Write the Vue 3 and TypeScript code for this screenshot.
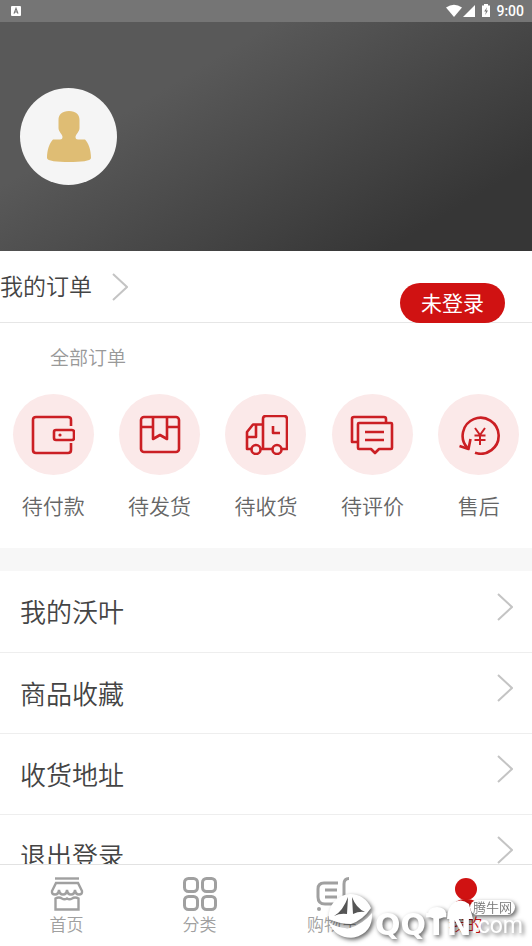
<script setup lang="ts">
interface OrderEntry {
  label: string
  icon: 'wallet' | 'box' | 'truck' | 'comment' | 'refund'
}

interface Tab {
  label: string
  icon: 'shop' | 'grid' | 'cart' | 'user'
  active?: boolean
}

const orders: OrderEntry[] = [
  { label: '待付款', icon: 'wallet' },
  { label: '待发货', icon: 'box' },
  { label: '待收货', icon: 'truck' },
  { label: '待评价', icon: 'comment' },
  { label: '售后', icon: 'refund' },
]

const menu: string[] = ['我的沃叶', '商品收藏', '收货地址', '退出登录']

const tabs: Tab[] = [
  { label: '首页', icon: 'shop' },
  { label: '分类', icon: 'grid' },
  { label: '购物车', icon: 'cart' },
  { label: '我的', icon: 'user', active: true },
]
</script>

<template>
  <div class="app">
    <div class="status">
      <svg class="status-app" viewBox="0 0 10 10" aria-hidden="true">
        <rect width="10" height="10" rx="1" fill="#fff" />
        <path d="M3 7.6 5 2.4 7 7.6M3.7 6h2.6" fill="none" stroke="#777" stroke-width="1.2" />
      </svg>
      <div class="status-right">
        <svg class="status-signal" viewBox="0 0 46 14" aria-hidden="true">
          <path d="M0 3.5Q8 -2 16 3.5L8 13Z" fill="#fff" />
          <path d="M29 1V13H17Z" fill="#fff" />
          <path d="M36 1.4H38V0H42V1.4H44V13H36Z" fill="#fff" />
          <path d="M41 3.2 38.2 7.6H40L39.2 11 42 6.6H40.2Z" fill="#777" />
        </svg>
        <span>9:00</span>
      </div>
    </div>

    <main class="content">
      <header class="profile">
        <div class="avatar">
          <svg viewBox="0 0 44 51" aria-hidden="true">
            <path
              d="M22 0C29 0 32.500 3.500 32.500 9V17C32.500 21 28.500 23 28.500 26Q28.500 28.500 31 28.500H38C41.500 32 44 39 44 47C44 50 34 51 22 51C10 51 0 50 0 47C0 39 2.500 32 6 28.500H13Q15.500 28.500 15.500 26C15.500 23 11.500 21 11.500 17V9C11.500 3.500 15 0 22 0Z"
              fill="#dfbd74"
            />
          </svg>
        </div>
      </header>

      <section class="orders">
        <div class="orders-head">
          <h2>我的订单</h2>
          <svg class="chevron small" viewBox="0 0 16 28" aria-hidden="true"><path d="M1 1 15 14 1 27" /></svg>
          <button type="button" class="login">未登录</button>
        </div>
        <a class="all" href="#">全部订单</a>
        <nav class="order-list">
          <a v-for="o in orders" :key="o.label" class="order" href="#">
            <span class="disc">
              <svg viewBox="0 0 44 40" aria-hidden="true">
                <g v-if="o.icon === 'wallet'">
                  <path d="M40 11V5Q40 2 37 2H5Q2 2 2 5V35Q2 38 5 38H37Q40 38 40 35V28" />
                  <rect x="23" y="15" width="20" height="10" rx="2" />
                  <circle cx="29" cy="20" r="1.600" class="solid" />
                </g>
                <g v-else-if="o.icon === 'box'">
                  <rect x="3" y="2" width="38" height="35" rx="3" />
                  <path d="M3 12H15M29 12H41M15 2V24L22 20 29 24V2" />
                </g>
                <g v-else-if="o.icon === 'truck'">
                  <path d="M7 34H3V17L9 9.500H19M19 34V4Q19 1 22 1H40Q43 1 43 4V34H38M17 34H28M3 22H12V10" />
                  <path d="M29 11V18H36" />
                  <circle cx="12" cy="34.500" r="4.500" />
                  <circle cx="33" cy="34.500" r="4.500" />
                </g>
                <g v-else-if="o.icon === 'comment'">
                  <path d="M7 27H2V4Q2 2 4 2H34Q36 2 36 4V8" />
                  <path d="M9 8H41Q42 8 42 9V33Q42 34 41 34H29L25 38 21 34H9Q8 34 8 33V9Q8 8 9 8Z" />
                  <path d="M15 17H34M15 25H34" />
                </g>
                <g v-else>
                  <path d="M10.500 33A18 18 0 1 1 18 37.800" />
                  <path d="M2.500 31 11.500 34 13.500 24" />
                  <path d="M18 13 23 20 28 13M23 20V30M17.500 20.500H28.500M17.500 25H28.500" class="thin" />
                </g>
              </svg>
            </span>
            <span class="order-label">{{ o.label }}</span>
          </a>
        </nav>
      </section>

      <nav class="menu">
        <a v-for="m in menu" :key="m" class="menu-row" href="#">
          <span>{{ m }}</span>
          <svg class="chevron" viewBox="0 0 16 28" aria-hidden="true"><path d="M1 1 15 14 1 27" /></svg>
        </a>
      </nav>
    </main>

    <nav class="tabbar">
      <a v-for="t in tabs" :key="t.label" class="tab" :class="{ active: t.active }" href="#">
        <svg viewBox="0 0 34 34" aria-hidden="true">
          <g v-if="t.icon === 'shop'" class="fine">
            <path d="M5 1.500H29" />
            <path d="M6 6H28L32 14Q32.500 17.500 29 17.500Q25.500 17.500 25 13Q24.500 17.500 21 17.500Q17.500 17.500 17 13Q16.500 17.500 13 17.500Q9.500 17.500 9 13Q8.500 17.500 5 17.500Q1.500 17.500 2 14Z" />
            <path d="M5.500 21.500Q9 19.500 12 21.500Q14.500 23 17 21.500Q19.500 23 22 21.500Q25 19.500 28.500 21.500V32.500H5.500Z" />
          </g>
          <g v-else-if="t.icon === 'grid'">
            <rect x="1.500" y="1.500" width="13" height="13" rx="4" />
            <rect x="19.500" y="1.500" width="13" height="13" rx="4" />
            <rect x="1.500" y="19.500" width="13" height="13" rx="4" />
            <rect x="19.500" y="19.500" width="13" height="13" rx="4" />
          </g>
          <g v-else-if="t.icon === 'cart'">
            <path d="M33 1.500Q28 1.500 28 7V20Q28 27 22 27H9Q2 27 2 20V12Q2 6 8 6H22M9 13H21M9 20H21" />
            <circle cx="3" cy="32" r="2" class="dot" />
            <circle cx="26" cy="32" r="2" class="dot" />
          </g>
          <g v-else class="figure">
            <circle cx="17" cy="12" r="11" />
            <path d="M2 34Q4 22 17 22Q30 22 32 34Z" />
          </g>
        </svg>
        <span>{{ t.label }}</span>
      </a>

      <div class="mark">
        <svg class="mark-figure" viewBox="0 0 48 26" aria-hidden="true">
          <ellipse cx="10" cy="14" rx="9" ry="6" fill="#fff" />
          <path d="M20 20Q20 8 28 3Q35 -1 42 5L46 20Z" fill="#fff" />
        </svg>
        <svg class="mark-ball" viewBox="0 0 50 46" aria-hidden="true">
          <path
            d="M25 1A22 22 0 0 1 46 15Q38 27 26 31Q14 31 4 26A22 22 0 0 1 25 1Z"
            fill="#fff"
          />
          <path d="M4 30Q15 36 25 35Q38 31 47 20Q48 40 29 44.500Q11 46 4 30Z" fill="#fff" />
          <path d="M9 23Q18 18 23 4L22 21Q15 20 9 23Z" fill="#555" />
          <path d="M27 4Q31 15 40 19Q34 18 28 21Z" fill="#555" />
        </svg>
        <span class="mark-name">QQTN</span>
        <span class="mark-com">.com</span>
        <span class="mark-pill">腾牛网</span>
      </div>
    </nav>
  </div>
</template>

<style>
body {
  margin: 0;
  background: #fff;
}
</style>

<style scoped>
.app {
  display: flex;
  flex-direction: column;
  height: 100vh;
  overflow: hidden;
  background: #fff;
  color: #444;
  font-family: Roboto, "Noto Sans CJK SC", sans-serif;
  font-weight: 350;
}
a {
  color: inherit;
  text-decoration: none;
}
svg {
  display: block;
}
.status {
  flex: none;
  display: flex;
  align-items: center;
  justify-content: space-between;
  height: 22px;
  padding: 0 8px 0 11px;
  background: #757575;
  color: #fff;
  font-size: 14px;
  font-weight: 500;
}
.status-app {
  width: 10px;
  height: 10px;
}
.status-right {
  display: flex;
  align-items: center;
  gap: 4px;
}
.status-signal {
  width: 46px;
  height: 14px;
}
.content {
  flex: 1;
  min-height: 0;
  overflow-y: auto;
  scrollbar-width: none;
}
.profile {
  display: flex;
  align-items: center;
  height: 229px;
  padding: 0 20px;
  box-sizing: border-box;
  background: linear-gradient(149deg, #595959 30%, #363636 84%);
}
.avatar {
  display: flex;
  align-items: center;
  justify-content: center;
  width: 97px;
  height: 97px;
  border-radius: 50%;
  background: #f5f5f5;
}
.avatar svg {
  width: 44px;
  height: 51px;
}
.orders-head {
  display: flex;
  align-items: center;
  height: 71px;
  padding-right: 27px;
  border-bottom: 1px solid #e6e6e6;
}
h2 {
  margin: 0;
  padding-bottom: 4px;
  font-size: 23px;
  font-weight: inherit;
}
.chevron {
  width: 16px;
  height: 28px;
  fill: none;
  stroke: #c4c4c4;
  stroke-width: 2;
}
.chevron.small {
  margin-left: 20px;
}
.login {
  align-self: flex-end;
  width: 105px;
  height: 40px;
  margin: 0 0 -1px auto;
  padding: 0 0 2px;
  border: 0;
  border-radius: 20px;
  background: #d01212;
  color: #fff;
  font: inherit;
  font-size: 21px;
  font-weight: 400;
}
.all {
  display: block;
  padding: 22px 50px 0;
  color: #999;
  font-size: 19px;
  line-height: 28px;
}
.order-list {
  display: grid;
  grid-template-columns: repeat(5, 1fr);
  padding: 21px 0 25px;
}
.order {
  display: flex;
  flex-direction: column;
  align-items: center;
  gap: 16px;
  color: #666;
  font-size: 21px;
  line-height: 32px;
}
.disc {
  display: flex;
  align-items: center;
  justify-content: center;
  width: 81px;
  height: 81px;
  border-radius: 50%;
  background: #fbe9e9;
}
.disc svg {
  width: 44px;
  height: 40px;
  fill: none;
  stroke: #cb1f24;
  stroke-width: 2.6;
  stroke-linejoin: round;
}
.disc .solid {
  fill: #cb1f24;
  stroke: none;
}
.disc .thin {
  stroke-width: 2;
}
.menu {
  border-top: 23px solid #f7f7f7;
}
.menu-row {
  display: flex;
  align-items: center;
  justify-content: space-between;
  height: 81px;
  padding: 0 19px 2px 20px;
  box-sizing: border-box;
  font-size: 26px;
}
.menu-row + .menu-row {
  border-top: 1px solid #eee;
}
.menu-row .chevron {
  margin-bottom: 8px;
}
.tabbar {
  position: relative;
  flex: none;
  display: grid;
  grid-template-columns: repeat(4, 1fr);
  height: 81px;
  border-top: 1px solid #e2e2e2;
  background: #fff;
}
.tab {
  display: flex;
  flex-direction: column;
  align-items: center;
  gap: 1px;
  padding-top: 12px;
  color: #a0a0a0;
  font-size: 17px;
  line-height: 26px;
}
.tab svg {
  width: 34px;
  height: 34px;
  fill: none;
  stroke: #a0a0a0;
  stroke-width: 3;
}
.tab .fine {
  stroke-width: 2.4;
}
.tab .dot {
  fill: #a0a0a0;
  stroke: none;
}
.tab .figure {
  fill: #d01212;
  stroke: none;
}
.tab.active {
  color: #d01212;
}
.mark {
  position: absolute;
  right: 9px;
  bottom: 7px;
  display: flex;
  align-items: flex-end;
  color: #fff;
  filter: drop-shadow(2px 2px 2px rgba(0, 0, 0, 0.6));
  pointer-events: none;
}
.mark-ball {
  width: 50px;
  height: 46px;
}
.mark-name {
  font-family: "DejaVu Sans", sans-serif;
  font-size: 30px;
  font-weight: 700;
  line-height: 28px;
}
.mark-com {
  font-size: 23px;
  font-weight: 400;
  line-height: 26px;
}
.mark-figure {
  position: absolute;
  top: 6px;
  right: 48px;
  width: 48px;
  height: 26px;
}
.mark-pill {
  position: absolute;
  top: 7px;
  right: 8px;
  padding: 0 3px;
  border-radius: 8px;
  background: #fff;
  color: #777;
  font-size: 13px;
  line-height: 15px;
}
</style>
